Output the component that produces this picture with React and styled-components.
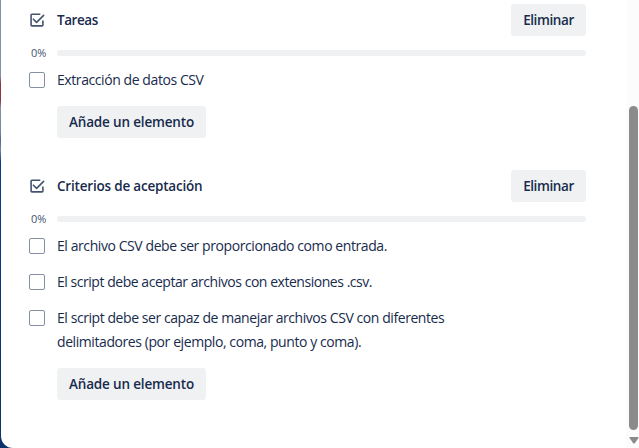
import React from "react";
import styled, { createGlobalStyle } from "styled-components";

const GlobalStyle = createGlobalStyle`
  * { box-sizing: border-box; }
  body { margin: 0; overflow: hidden; }
`;

const Board = styled.div`
  display: flex;
  width: 639px;
  height: 448px;
  padding-left: 1px;
  background: linear-gradient(#8590aa 0, #8590aa 76px, #8f3440 84px, #8f3440 100px, #8590aa 108px, #7886a5 132px, #52698f 140px, #7886a5 150px, #0b3a86 162px, #0c326e 448px);
  color: #172b4d;
  font: 400 14px/24px "Open Sans", "Noto Sans", sans-serif;
`;

const Dialog = styled.main`
  display: flex;
  flex: 1;
  justify-content: space-between;
  background: #fff;
  border-bottom-left-radius: 12px;
`;

const Content = styled.div`
  display: flex;
  flex-direction: column;
  gap: 32px;
  width: 585px;
  padding: 4px 0 0 28px;
`;

const Checklist = styled.section`
  display: flex;
  flex-direction: column;
`;

const Header = styled.header`
  display: flex;
  align-items: center;
  height: 32px;
`;

const IconSlot = styled.span`
  display: flex;
  width: 28px;
`;

const Title = styled.h3`
  flex: 1;
  margin: 0;
  font-size: 13.5px;
  font-weight: 600;
  letter-spacing: ${(p) => p.$tracking}px;
`;

const Button = styled.button`
  width: ${(p) => p.$width}px;
  height: 32px;
  padding: 0;
  border: 0;
  border-radius: 3px;
  background: #f0f1f3;
  color: #172b4d;
  font: 600 13.5px/20px "Open Sans", "Noto Sans", sans-serif;
  letter-spacing: ${(p) => p.$tracking}px;
  white-space: nowrap;
`;

const Progress = styled.div`
  display: flex;
  align-items: center;
  height: 14px;
  margin-top: 10px;
`;

const Percent = styled.span`
  width: 28px;
  padding-left: 2px;
  color: #44546f;
  font-size: 11px;
  line-height: 14px;
  letter-spacing: -0.15px;
`;

const Track = styled.div`
  flex: 1;
  height: 6px;
  border-radius: 3px;
  background: #f0f1f3;
`;

const Items = styled.ul`
  display: flex;
  flex-direction: column;
  gap: 12px;
  margin: 8px 0 14px;
  padding: 0;
  list-style: none;
`;

const Item = styled.li`
  display: flex;
  align-items: flex-start;
  gap: 12px;
`;

const Checkbox = styled.span`
  width: 16px;
  height: 16px;
  margin-top: 4px;
  border: 1px solid #8590a2;
  border-radius: 2px;
  background: #fff;
`;

const Line = styled.span`
  display: block;
  white-space: nowrap;
  letter-spacing: ${(p) => p.$tracking}px;
`;

const Footer = styled.footer`
  display: flex;
  padding-left: 28px;
`;

const Scrollbar = styled.div`
  display: flex;
  flex-direction: column;
  align-items: center;
  width: 13px;
  padding: 106px 0 0 2px;
  background: #fcfcfc;
`;

const Thumb = styled.div`
  width: 9px;
  height: 324px;
  margin-bottom: 7px;
  border-radius: 5px;
  background: #8b8b8b;
`;

const ChecklistIcon = () => (
  <svg width="16" height="16" viewBox="0 0 16 16" fill="none" stroke="#44546f" strokeWidth="1.6" strokeLinejoin="round">
    <path d="M11.3 2.2H2.9Q2.1 2.2 2.1 3V13Q2.1 13.9 2.9 13.9H13Q13.9 13.9 13.9 13V8.6" />
    <path d="M4.4 7.2L7.6 10.4L14.6 3.4" strokeLinecap="round" />
  </svg>
);

const checklists = [
  {
    title: "Tareas",
    tracking: -0.45,
    items: [[["Extracción de datos CSV", -0.42]]],
  },
  {
    title: "Criterios de aceptación",
    tracking: -0.2,
    items: [
      [["El archivo CSV debe ser proporcionado como entrada.", -0.42]],
      [["El script debe aceptar archivos con extensiones .csv.", -0.46]],
      [
        ["El script debe ser capaz de manejar archivos CSV con diferentes", -0.43],
        ["delimitadores (por ejemplo, coma, punto y coma).", -0.42],
      ],
    ],
  },
];

export default function App() {
  return (
    <>
      <GlobalStyle />
      <Board>
        <Dialog>
          <Content>
            {checklists.map((list) => (
              <Checklist key={list.title}>
                <Header>
                  <IconSlot><ChecklistIcon /></IconSlot>
                  <Title $tracking={list.tracking}>{list.title}</Title>
                  <Button $width={75} $tracking={-0.4}>Eliminar</Button>
                </Header>
                <Progress>
                  <Percent>0%</Percent>
                  <Track />
                </Progress>
                <Items>
                  {list.items.map((lines) => (
                    <Item key={lines[0][0]}>
                      <Checkbox />
                      <div>
                        {lines.map(([text, tracking]) => (
                          <Line key={text} $tracking={tracking}>{text}</Line>
                        ))}
                      </div>
                    </Item>
                  ))}
                </Items>
                <Footer>
                  <Button $width={149} $tracking={-0.17}>Añade un elemento</Button>
                </Footer>
              </Checklist>
            ))}
          </Content>
          <Scrollbar>
            <Thumb />
            <svg width="10" height="7" viewBox="0 0 10 7">
              <path d="M1 0H9Q9.8 0.3 9.3 1.2L6 6Q5 7 4 6L0.7 1.2Q0.2 0.3 1 0Z" fill="#8b8b8b" />
            </svg>
          </Scrollbar>
        </Dialog>
      </Board>
    </>
  );
}
